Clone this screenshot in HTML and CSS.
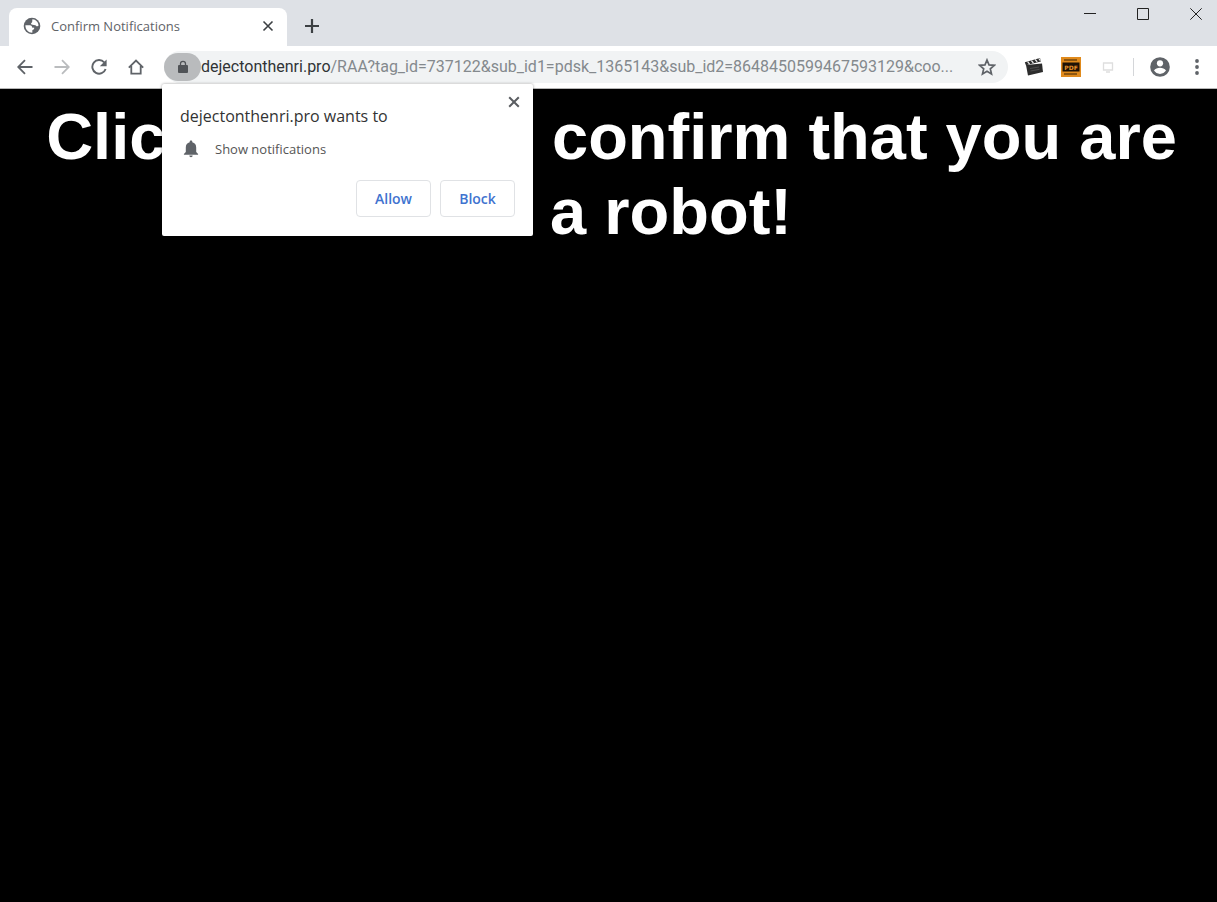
FILE: index.html
```html
<!DOCTYPE html>
<html lang="en">
<head>
	<meta charset="utf-8">
	<title>Confirm Notifications</title>
	<link rel="stylesheet" href="styles.css">
</head>
<body>
	<header class="browser">
		<div class="tabstrip">
			<div class="tab">
				<svg class="globe" width="18" height="18" viewBox="0 0 18 18">
					<circle cx="9" cy="9" r="8.3" fill="#5f6368"/>
					<path fill="#fff" d="M2.4 8.2 L6.8 8.3 C8.6 8.6 9.2 9.4 9 10.6 L11.2 10.8 C11.5 12 10.6 12.8 9.4 12.9 L9.3 15.7 C5.5 15.8 2.2 12.6 2.4 8.2Z"/>
					<path fill="#fff" d="M9.6 2.3 C12.8 2.6 15.2 5 15.6 8.4 L14 9.6 L12.4 8.2 L9.6 7.8 C7.6 7.6 7.6 5.8 9 5.4 L9.3 4 C9.4 3.4 9 2.8 9.6 2.3Z"/>
				</svg>
				<span class="tab-title">Confirm Notifications</span>
				<button class="icon-btn tab-close" type="button" aria-label="Close tab">
					<svg width="12" height="12" viewBox="0 0 12 12"><path d="M1.5 1.5l9 9M10.5 1.5l-9 9" stroke="#3c4043" stroke-width="1.6"/></svg>
				</button>
			</div>
			<button class="icon-btn new-tab" type="button" aria-label="New tab">
				<svg width="14" height="14" viewBox="0 0 14 14"><path d="M7 0v14M0 7h14" stroke="#3c4043" stroke-width="2.2"/></svg>
			</button>
			<div class="window-controls">
				<button class="icon-btn" type="button" aria-label="Minimize">
					<svg width="12" height="12" viewBox="0 0 12 12"><path d="M0 5.5h12" stroke="#222"/></svg>
				</button>
				<button class="icon-btn" type="button" aria-label="Maximize">
					<svg width="12" height="12" viewBox="0 0 12 12"><path d="M.5.5h11v11h-11z" fill="none" stroke="#222"/></svg>
				</button>
				<button class="icon-btn" type="button" aria-label="Close">
					<svg width="12" height="12" viewBox="0 0 12 12"><path d="M.3.3l11.4 11.4M11.7.3L.3 11.7" stroke="#222"/></svg>
				</button>
			</div>
		</div>

		<div class="toolbar">
			<nav class="nav">
				<button class="icon-btn" type="button" aria-label="Back">
					<svg width="16" height="16" viewBox="0 0 16 16"><path d="M15.5 8H2M8 1.2L1.2 8L8 14.8" fill="none" stroke="#5f6368" stroke-width="1.8"/></svg>
				</button>
				<button class="icon-btn" type="button" aria-label="Forward">
					<svg width="16" height="16" viewBox="0 0 16 16"><path d="M.5 8H14M8 1.2L14.8 8L8 14.8" fill="none" stroke="#babcbe" stroke-width="1.8"/></svg>
				</button>
				<button class="icon-btn" type="button" aria-label="Reload">
					<svg width="16" height="16" viewBox="0 0 16 16"><path d="M13.2 3.3A6.8 6.8 0 1 0 14.6 10" fill="none" stroke="#5f6368" stroke-width="1.9"/><path d="M15.6.4v6.8H8.8z" fill="#5f6368"/></svg>
				</button>
				<button class="icon-btn" type="button" aria-label="Home">
					<svg width="16" height="16" viewBox="0 0 16 16"><path d="M.8 8.6L8 1.6l7.2 7M3.3 7v7.7h9.4V7" fill="none" stroke="#5f6368" stroke-width="1.8"/></svg>
				</button>
			</nav>

			<div class="omnibox">
				<button class="icon-btn site-info" type="button" aria-label="View site information">
					<svg width="12" height="14" viewBox="0 0 12 14"><rect x="1" y="5" width="10" height="8" rx="1" fill="#505357"/><path d="M3.500 5.500V3.800a2.500 2.500 0 0 1 5 0v1.700" fill="none" stroke="#505357" stroke-width="1.300"/></svg>
				</button>
				<a class="url" href="#"><span class="host">dejectonthenri.pro</span>/RAA?tag_id=737122&amp;sub_id1=pdsk_1365143&amp;sub_id2=8648450599467593129&amp;coo...</a>
				<button class="icon-btn star" type="button" aria-label="Bookmark this page">
					<svg width="18" height="18" viewBox="0 0 18 18"><path d="M9 2l2 4.900 5.300.400-4 3.500 1.200 5.100L9 13.200l-4.500 2.700 1.200-5.100-4-3.500 5.300-.400z" fill="none" stroke="#5f6368" stroke-width="1.700"/></svg>
				</button>

				<section class="prompt" role="dialog" aria-labelledby="prompt-title">
					<button class="icon-btn prompt-close" type="button" aria-label="Close prompt">
						<svg width="12" height="12" viewBox="0 0 12 12"><path d="M1.200 1.200l9.600 9.600M10.800 1.200l-9.600 9.600" stroke="#5a5d61" stroke-width="2"/></svg>
					</button>
					<h2 id="prompt-title">dejectonthenri.pro wants to</h2>
					<p class="permission">
						<svg width="16" height="18" viewBox="0 0 16 18"><path d="M8 .5c.8 0 1.300.5 1.300 1.300v.5c2.500.6 3.900 2.600 3.900 5.100v4.700l1.900 1.900v.8H.9V14l1.900-1.900V7.400c0-2.500 1.400-4.500 3.900-5.100v-.5C6.700 1 7.200.5 8 .5zM6.300 15.600h3.400a1.700 1.700 0 0 1-3.400 0z" fill="#5f6368"/></svg>
						Show notifications
					</p>
					<div class="actions">
						<button type="button">Allow</button>
						<button type="button">Block</button>
					</div>
				</section>
			</div>

			<div class="extensions">
				<button class="icon-btn" type="button" aria-label="Video extension">
					<svg width="20" height="20" viewBox="0 0 20 20">
						<path d="M2 8L18 6.500l1 8.500-15 3.500z" fill="#2c2c2c"/>
						<path d="M.8 5.300L16 1l.9 3.400L1.900 8.300z" fill="#2c2c2c"/>
						<path d="M3.600 4.700l2 2.400M7.400 3.600l2 2.400M11.200 2.500l2 2.400M14.800 1.500l1.600 2.200" stroke="#eee" stroke-width="1.200"/>
						<path d="M6 11.500l9-1.500M6.500 14l9-1.700" stroke="#555" stroke-width=".8"/>
					</svg>
				</button>
				<button class="icon-btn" type="button" aria-label="PDF extension">
					<svg width="20" height="20" viewBox="0 0 20 20">
						<path d="M0 0h20v20H0z" fill="#e08a1c"/>
						<path d="M3 3h13M3 17h13" stroke="#3a2205" stroke-width="1.200"/>
						<path d="M1.500 5.500h17v9h-17z" fill="#1d1206"/>
						<text class="pdf-label" x="10" y="12.500" text-anchor="middle">PDF</text>
					</svg>
				</button>
				<button class="icon-btn" type="button" aria-label="Screen extension">
					<svg width="20" height="20" viewBox="0 0 20 20"><path d="M5.500 6h9v7h-9zM8 15h4" fill="none" stroke="#dedede" stroke-width="1.300"/></svg>
				</button>
				<span class="divider"></span>
				<button class="icon-btn" type="button" aria-label="Profile">
					<svg width="20" height="20" viewBox="0 0 20 20"><circle cx="10" cy="10" r="9.800" fill="#5f6368"/><circle cx="10" cy="6.300" r="3.100" fill="#fff"/><path d="M4 13.600c1.200-2 3.600-2.900 6-2.900s4.800.9 6 2.900c-1.300 2-3.500 3.300-6 3.300s-4.700-1.300-6-3.300z" fill="#fff"/></svg>
				</button>
				<button class="icon-btn" type="button" aria-label="Menu">
					<svg width="20" height="20" viewBox="0 0 20 20" fill="#5f6368"><circle cx="10" cy="4" r="1.900"/><circle cx="10" cy="10" r="1.900"/><circle cx="10" cy="16" r="1.900"/></svg>
				</button>
			</div>
		</div>
	</header>

	<main>
		<h1>Click "Allow" to confirm that you are not a robot!</h1>
	</main>
</body>
</html>
```
FILE: styles.css
```css
* {
	box-sizing: border-box;
}

body {
	margin: 0;
	background: #000;
	font-family: "Open Sans", "Noto Sans", sans-serif;
	color: #3c4043;
}

svg {
	display: block;
	flex: none;
}

.icon-btn {
	display: flex;
	align-items: center;
	justify-content: center;
	flex: none;
	padding: 0;
	border: none;
	background: none;
	cursor: pointer;
}

.tabstrip {
	display: flex;
	height: 46px;
	padding-left: 9px;
	background: #dee1e6;
}

.tab {
	display: flex;
	align-items: center;
	width: 278px;
	height: 38px;
	margin-top: 8px;
	padding: 0 10px 2px 14px;
	border-radius: 8px 8px 0 0;
	background: #fff;
}

.tab-title {
	flex: 1;
	margin-left: 10px;
	font-size: 13px;
	color: #5f6368;
}

.tab-close {
	width: 18px;
	height: 18px;
}

.new-tab {
	width: 50px;
	height: 36px;
	margin-top: 8px;
}

.window-controls {
	display: flex;
	gap: 11px;
	margin-left: auto;
}

.window-controls .icon-btn {
	width: 42px;
	height: 28px;
}

.toolbar {
	display: flex;
	align-items: center;
	height: 43px;
	padding: 0 2px 0 6px;
	border-bottom: 1px solid #b6b6b6;
	background: #fff;
}

.nav {
	display: flex;
}

.nav .icon-btn {
	width: 37px;
	height: 32px;
}

.omnibox {
	position: relative;
	display: flex;
	flex: 1;
	align-items: center;
	min-width: 0;
	height: 32px;
	margin-left: 10px;
	border-radius: 16px;
	background: #f1f3f4;
}

.site-info {
	width: 37px;
	height: 28px;
	border-radius: 14px;
	background: #b9bbbd;
}

.url {
	flex: 1;
	overflow: hidden;
	font-family: Roboto, sans-serif;
	font-size: 16px;
	line-height: 24px;
	white-space: nowrap;
	text-decoration: none;
	color: #84898d;
}

.host {
	color: #303336;
}

.star {
	width: 18px;
	height: 32px;
	margin-right: 12px;
}

.extensions {
	display: flex;
	align-items: center;
	margin-left: 7px;
}

.extensions .icon-btn {
	width: 37px;
	height: 32px;
}

.pdf-label {
	font: bold 6px "DejaVu Sans", sans-serif;
	fill: #e8922a;
}

.divider {
	width: 1px;
	height: 18px;
	margin: 0 7px;
	background: #d4d6d9;
}

/* permission bubble hangs under the address bar */
.prompt {
	position: absolute;
	top: 33px;
	left: -2px;
	width: 371px;
	padding: 20px 18px 19px;
	border-radius: 2px;
	background: #fff;
	box-shadow: 0 0 3px rgba(0,0,0,0.4);
}

.prompt h2 {
	margin: 0;
	font-size: 16px;
	font-weight: 400;
	line-height: 24px;
	color: #333;
}

.prompt-close {
	position: absolute;
	top: 9px;
	right: 10px;
	width: 18px;
	height: 18px;
}

.permission {
	display: flex;
	align-items: center;
	gap: 16px;
	margin: 10px 0 20px;
	padding-left: 3px;
	font-size: 13px;
	line-height: 22px;
	color: #555;
}

.actions {
	display: flex;
	justify-content: flex-end;
	gap: 9px;
}

.actions button {
	width: 75px;
	height: 37px;
	padding: 0;
	border: 1px solid #e0e2e5;
	border-radius: 4px;
	background: #fff;
	font-family: "Open Sans", sans-serif;
	font-size: 14px;
	font-weight: 600;
	color: #3f73cf;
	cursor: pointer;
}

main {
	padding: 10px 37px 10px 43px;
}

h1 {
	margin: 0;
	font-family: "Liberation Sans", Arial, sans-serif;
	font-size: 65px;
	line-height: 75px;
	text-align: center;
	color: #fff;
}
```
